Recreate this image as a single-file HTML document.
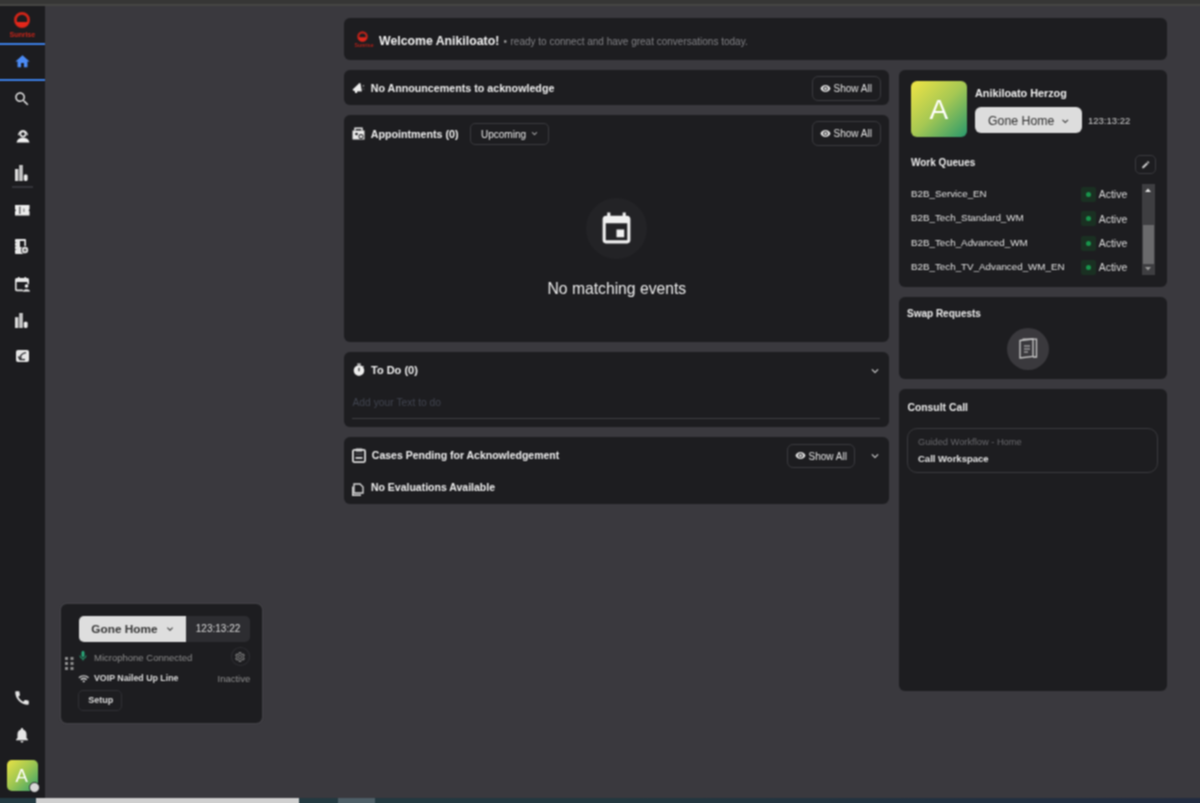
<!DOCTYPE html>
<html><head><meta charset="utf-8">
<style>
*{box-sizing:border-box;margin:0;padding:0}
html,body{width:1200px;height:803px;overflow:hidden;background:#3a393e;}
body{font-family:"Liberation Sans",sans-serif;color:#e6e6e6}
.a{position:absolute}
.card{position:absolute;background:#1d1d20;border-radius:6px}
.t{position:absolute;white-space:nowrap;line-height:1}
.btn{position:absolute;border:1px solid #3a3a3e;border-radius:6px}
svg{position:absolute;overflow:visible}
#wrap{position:absolute;left:0;top:0;width:1200px;height:803px;filter:url(#bl)}
</style></head><body><svg width="0" height="0" style="position:absolute"><filter id="bl" color-interpolation-filters="sRGB" x="0" y="0" width="100%" height="100%"><feConvolveMatrix order="3" kernelMatrix="1 2 1 2 4 2 1 2 1" divisor="16" edgeMode="duplicate"/></filter></svg><div id="wrap">
<div class="a" style="left:0;top:0;width:1200px;height:4px;background:#363635"></div>
<div class="a" style="left:0;top:4px;width:1200px;height:2px;background:#464644"></div>
<div class="a" style="left:0;top:6px;width:45px;height:792px;background:#1c1c1f"></div>
<div class="a" style="left:0;top:798px;width:1200px;height:5px;background:linear-gradient(90deg,#233a42 0%,#23383f 50%,#222c40 100%)"></div>
<div class="a" style="left:36px;top:798px;width:263px;height:5px;background:#cfcfcf"></div>
<div class="a" style="left:338px;top:798px;width:37px;height:5px;background:#4d5e66"></div>
<svg style="left:13px;top:10.5px;" width="18" height="18" viewBox="0 0 18 18"><circle cx="9" cy="9" r="6.6" fill="none" stroke="#cc2418" stroke-width="2.8"/><path d="M2.6 11 A6.6 6.6 0 0 0 15.4 11 Z" fill="#e3271b"/></svg>
<div class="t" style="left:9.5px;top:31.41px;font-size:7.2px;font-weight:700;color:#c62419;letter-spacing:-0.1px;">Sunrise</div>
<div class="a" style="left:0;top:43px;width:45px;height:2px;background:#3b7ee6"></div>
<div class="a" style="left:0;top:79px;width:45px;height:2px;background:#3b7ee6"></div>
<svg style="left:13.5px;top:52.5px;" width="17" height="17" viewBox="0 0 24 24"><path fill="#4b8bf5" d="M10 20v-6h4v6h5v-8h3L12 3 2 12h3v8z"/></svg>
<svg style="left:13px;top:89.5px;" width="18" height="18" viewBox="0 0 24 24"><path fill="#e0e0e0" d="M15.5 14h-.79l-.28-.27C15.41 12.59 16 11.11 16 9.5 16 5.91 13.09 3 9.5 3S3 5.91 3 9.5 5.91 16 9.5 16c1.61 0 3.090-.59 4.23-1.57l.27.28v.79l5 4.99L20.49 19l-4.990-5zm-6 0C7.01 14 5 11.99 5 9.5S7.01 5 9.5 5 14 7.01 14 9.5 11.99 14 9.5 14z"/></svg>
<svg style="left:15.5px;top:129px;" width="14" height="14" viewBox="0 0 14 14"><circle cx="7" cy="5" r="2.6" fill="none" stroke="#e8e8e8" stroke-width="1.6"/><path d="M2.6 6.2 A4.4 4.4 0 0 1 11.4 6.2" fill="none" stroke="#e8e8e8" stroke-width="1.3"/><path d="M0.5 13.5 C1.5 9.8 4 8.8 7 8.8 C10 8.8 12.5 9.8 13.5 13.5 Z" fill="#f0f0f0"/></svg>
<svg style="left:15.4px;top:164.5px;" width="13" height="16" viewBox="0 0 13 16"><rect x="0" y="4" width="3.4" height="12" fill="#d8d8d8"/><rect x="4.2" y="0" width="3.6" height="16" fill="#c8c8c8"/><rect x="8.8" y="9.5" width="3.8" height="6.5" rx="1.4" fill="#ececec"/></svg>
<div class="a" style="left:12px;top:186px;width:21px;height:2px;background:#34343a"></div>
<svg style="left:15.3px;top:205px;" width="14.5" height="10.5" viewBox="0 0 14.5 10.5"><path d="M0 0H14.5V4.2A1.1 1.1 0 0 0 14.5 6.3V10.5H0V6.3A1.1 1.1 0 0 0 0 4.2Z" fill="#ececec"/><rect x="4.3" y="1.5" width="1.1" height="7.5" fill="#3a3a3e"/><rect x="8.2" y="3.5" width="1.4" height="3.5" fill="#8a8a8a"/></svg>
<svg style="left:15.3px;top:239.3px;" width="14" height="15" viewBox="0 0 14 15"><rect x="0" y="0" width="11" height="15" rx="1" fill="#e6e6e6"/><rect x="5" y="2" width="4.3" height="6" fill="#1c1c1f"/><rect x="0" y="3" width="1.3" height="1" fill="#6a6a6a"/><rect x="0" y="6.5" width="1.3" height="1" fill="#6a6a6a"/><rect x="0" y="10" width="1.3" height="1" fill="#6a6a6a"/><circle cx="10" cy="11" r="4" fill="#1c1c1f"/><circle cx="10" cy="11" r="3.2" fill="#e6e6e6"/><circle cx="10" cy="11" r="1.6" fill="#6a6a6a"/></svg>
<svg style="left:15px;top:277px;" width="15" height="14.5" viewBox="0 0 15 14.5"><rect x="0.8" y="1.8" width="12.4" height="11.6" rx="1" fill="none" stroke="#e6e6e6" stroke-width="1.6"/><rect x="0.8" y="1.8" width="12.4" height="3.2" fill="#e6e6e6"/><rect x="3" y="0" width="1.5" height="2.5" fill="#e6e6e6"/><rect x="9.5" y="0" width="1.5" height="2.5" fill="#e6e6e6"/><circle cx="11.3" cy="10.8" r="4" fill="#1c1c1f"/><circle cx="11.5" cy="9" r="1.8" fill="#f0f0f0"/><path d="M8 14.5 C8.3 11.5 14.7 11.5 15 14.5Z" fill="#f0f0f0"/></svg>
<svg style="left:15.4px;top:312.5px;" width="13" height="15" viewBox="0 0 13 15"><rect x="0" y="4.2" width="3.4" height="10.8" fill="#d8d8d8"/><rect x="4.2" y="0" width="3.6" height="15" fill="#c8c8c8"/><rect x="8.8" y="8.8" width="3.8" height="6.2" rx="1.4" fill="#ececec"/></svg>
<svg style="left:15.5px;top:350.3px;" width="13" height="12" viewBox="0 0 13 12"><rect x="0" y="0" width="13" height="12" rx="2" fill="#e6e6e6"/><path d="M10 2.6 Q5 3.2 3.6 8.4" fill="none" stroke="#2a2a2e" stroke-width="1.4"/><path d="M3.5 9.6 H9" fill="none" stroke="#2a2a2e" stroke-width="1.4"/><path d="M2.2 6.5 L3.6 8.8 L5.8 7.4" fill="none" stroke="#2a2a2e" stroke-width="1.2"/></svg>
<svg style="left:13px;top:689px;" width="18" height="18" viewBox="0 0 24 24"><path fill="#e6e6e6" d="M20.01 15.38c-1.23 0-2.42-.2-3.53-.56-.35-.12-.74-.03-1.01.24l-1.57 1.97c-2.83-1.35-5.48-3.9-6.89-6.830l1.95-1.66c.27-.28.35-.67.24-1.02-.37-1.11-.56-2.3-.56-3.53 0-.54-.45-.99-.99-.99H4.19C3.65 3 3 3.24 3 3.99 3 13.28 10.73 21 20.01 21c.71 0 .99-.63.99-1.18v-3.45c0-.54-.45-.99-.99-.99z"/></svg>
<svg style="left:13px;top:726px;" width="18" height="18" viewBox="0 0 24 24"><path fill="#e6e6e6" d="M12 22c1.1 0 2-.9 2-2h-4c0 1.1.89 2 2 2zm6-6v-5c0-3.07-1.64-5.64-4.5-6.32V4c0-.83-.67-1.5-1.5-1.5s-1.5.67-1.5 1.5v.68C7.63 5.36 6 7.92 6 11v5l-2 2v1h16v-1l-2-2z"/></svg>
<div class="a" style="left:7px;top:760px;width:31px;height:31px;border-radius:5px;background:linear-gradient(135deg,#e9e245 0%,#9bc552 50%,#2f9e6c 100%)"></div>
<div class="t" style="left:15.6px;top:766.94px;font-size:18.5px;font-weight:400;color:#ffffff;">A</div>
<div class="a" style="left:29px;top:782px;width:11px;height:11px;border-radius:50%;background:#d8d8d8;border:1.5px solid #1c1c1f"></div>
<div class="card" style="left:344px;top:18px;width:823px;height:42px"></div>
<div class="card" style="left:344px;top:70px;width:545px;height:35px"></div>
<div class="card" style="left:344px;top:115px;width:545px;height:227px"></div>
<div class="card" style="left:344px;top:352px;width:545px;height:75px"></div>
<div class="card" style="left:344px;top:437px;width:545px;height:67px"></div>
<div class="card" style="left:899px;top:70px;width:268px;height:217px"></div>
<div class="card" style="left:899px;top:297px;width:268px;height:82px"></div>
<div class="card" style="left:899px;top:389px;width:268px;height:302px"></div>
<div class="card" style="left:61px;top:604px;width:201px;height:119px;box-shadow:0 0 0 1.5px #403f44"></div>
<svg style="left:357px;top:31px;" width="11" height="11" viewBox="0 0 11 11"><circle cx="5.5" cy="5.5" r="4.2" fill="none" stroke="#b8221a" stroke-width="2.2"/><path d="M1.3 6.3 A4.2 4.2 0 0 0 9.7 6.3 Z" fill="#dd261b"/></svg>
<div class="t" style="left:354.5px;top:43.10px;font-size:5.2px;font-weight:700;color:#b02018;">Sunrise</div>
<div class="t" style="left:379px;top:34.59px;font-size:12.3px;font-weight:700;color:#f2f2f2;">Welcome Anikiloato!</div>
<div class="t" style="left:503.5px;top:36.53px;font-size:10px;font-weight:400;color:#9a9a9a;">&bull;</div>
<div class="t" style="left:510.5px;top:36.53px;font-size:10px;font-weight:400;color:#808084;">ready to connect and have great conversations today.</div>
<svg style="left:352px;top:82px;" width="13" height="12" viewBox="0 0 13 12"><path d="M0.8 7.2 L7.2 1.2 C7.8 0.7 8.3 0.9 8.5 1.6 L9.8 8.4 C9.9 9.1 9.5 9.5 8.9 9.4 L5.5 9.2 L5 11 L3 11 L2.8 9 C1 8.8 0.3 8 0.8 7.2Z" fill="#ececec"/><rect x="10.6" y="3" width="1.6" height="1.6" fill="#8a8a8a"/><rect x="10.8" y="6.5" width="1.5" height="1.2" fill="#5a5a5a"/></svg>
<div class="t" style="left:370.7px;top:82.94px;font-size:10.7px;font-weight:700;color:#f0f0f0;">No Announcements to acknowledge</div>
<div class="btn" style="left:812px;top:75.5px;width:69px;height:25px"></div>
<svg style="left:819.5px;top:82.5px;" width="11" height="11" viewBox="0 0 24 24"><path fill="#e0e0e0" d="M12 4.5C7 4.5 2.73 7.61 1 12c1.73 4.39 6 7.5 11 7.5s9.27-3.11 11-7.5c-1.73-4.39-6-7.5-11-7.5zM12 17c-2.76 0-5-2.240-5-5s2.24-5 5-5 5 2.24 5 5-2.24 5-5 5zm0-8c-1.66 0-3 1.34-3 3s1.34 3 3 3 3-1.34 3-3-1.34-3-3-3z"/></svg>
<div class="t" style="left:833.5px;top:83.94px;font-size:10px;font-weight:400;color:#e4e4e4;">Show All</div>
<svg style="left:352px;top:127px;" width="13" height="13" viewBox="0 0 13 13"><path d="M0.5 3.5 H12.5 V12.5 H0.5 Z" fill="#e8e8e8"/><path d="M3 3.5 V1.2 H10 V3.5" fill="none" stroke="#e8e8e8" stroke-width="1.5"/><circle cx="4.5" cy="7" r="1.3" fill="#1d1d20"/><circle cx="9" cy="9.5" r="2.5" fill="#1d1d20"/><circle cx="9" cy="9.5" r="1.6" fill="#e8e8e8"/></svg>
<div class="t" style="left:370.7px;top:129.14px;font-size:10.7px;font-weight:700;color:#f0f0f0;">Appointments (0)</div>
<div class="btn" style="left:470px;top:123px;width:79px;height:22px;border-radius:5px"></div>
<div class="t" style="left:481px;top:129.94px;font-size:10px;font-weight:400;color:#ececec;">Upcoming</div>
<svg style="left:528.5px;top:127.5px;" width="11" height="11" viewBox="0 0 24 24"><path fill="#bdbdbd" d="M7.41 8.59L12 13.17l4.59-4.58L18 10l-6 6-6-6 1.41-1.41z"/></svg>
<div class="btn" style="left:812px;top:121px;width:69px;height:25px"></div>
<svg style="left:819.5px;top:128.0px;" width="11" height="11" viewBox="0 0 24 24"><path fill="#e0e0e0" d="M12 4.5C7 4.5 2.73 7.61 1 12c1.73 4.39 6 7.5 11 7.5s9.27-3.11 11-7.5c-1.73-4.39-6-7.5-11-7.5zM12 17c-2.76 0-5-2.240-5-5s2.24-5 5-5 5 2.24 5 5-2.24 5-5 5zm0-8c-1.66 0-3 1.34-3 3s1.34 3 3 3 3-1.34 3-3-1.34-3-3-3z"/></svg>
<div class="t" style="left:833.5px;top:129.44px;font-size:10px;font-weight:400;color:#e4e4e4;">Show All</div>
<div class="a" style="left:585.5px;top:197.5px;width:61px;height:61px;border-radius:50%;background:#232326"></div>
<svg style="left:597.5px;top:210.5px;" width="37" height="37" viewBox="0 0 24 24"><path fill="#f0f0f0" d="M17 12h-5v5h5v-5zM16 1v2H8V1H6v2H5c-1.11 0-1.99.9-1.99 2L3 19c0 1.1.89 2 2 2h14c1.1 0 2-.9 2-2V5c0-1.1-.9-2-2-2h-1V1h-2zm3 18H5V8h14v11z"/></svg>
<div class="t" style="left:547.5px;top:281.01px;font-size:15.7px;font-weight:400;color:#ececec;">No matching events</div>
<svg style="left:351.5px;top:363px;" width="14" height="14" viewBox="0 0 24 24"><path fill="#ededed" d="M9 1h6v2H9zm10.03 6.39l1.42-1.42c-.43-.51-.9-.99-1.410-1.41l-1.42 1.42C16.07 4.42 14.12 4 12 4c-4.97 0-9 4.03-9 9s4.02 9 9 9 9-4.03 9-9c0-2.12-.74-4.07-1.97-5.61zM13 14h-2V8h2v6z"/></svg>
<div class="t" style="left:371px;top:365.49px;font-size:11px;font-weight:700;color:#f0f0f0;">To Do (0)</div>
<svg style="left:868px;top:363.5px;" width="14" height="14" viewBox="0 0 24 24"><path fill="#cfcfcf" d="M7.41 8.59L12 13.17l4.59-4.58L18 10l-6 6-6-6 1.41-1.41z"/></svg>
<div class="t" style="left:352.5px;top:397.58px;font-size:10.3px;font-weight:400;color:#40444f;">Add your Text to do</div>
<div class="a" style="left:352px;top:418px;width:528px;height:1px;background:#3e3e42"></div>
<svg style="left:352px;top:447.5px;" width="14" height="15" viewBox="0 0 14 15"><rect x="0.9" y="1.9" width="12.2" height="12.2" rx="1.5" fill="none" stroke="#d8d8d8" stroke-width="1.8"/><rect x="3.5" y="0.5" width="7" height="3" rx="0.8" fill="#d8d8d8"/><rect x="3.5" y="9" width="7" height="1.8" fill="#d8d8d8"/><rect x="3.5" y="5" width="7" height="2.5" fill="#3a3a3e"/></svg>
<div class="t" style="left:371.8px;top:450.11px;font-size:10.5px;font-weight:700;color:#f0f0f0;">Cases Pending for Acknowledgement</div>
<div class="btn" style="left:787px;top:443.5px;width:68px;height:24.5px"></div>
<svg style="left:794.5px;top:450.25px;" width="11" height="11" viewBox="0 0 24 24"><path fill="#e0e0e0" d="M12 4.5C7 4.5 2.73 7.61 1 12c1.73 4.39 6 7.5 11 7.5s9.27-3.11 11-7.5c-1.73-4.39-6-7.5-11-7.5zM12 17c-2.76 0-5-2.240-5-5s2.24-5 5-5 5 2.24 5 5-2.24 5-5 5zm0-8c-1.66 0-3 1.34-3 3s1.34 3 3 3 3-1.34 3-3-1.34-3-3-3z"/></svg>
<div class="t" style="left:808.5px;top:451.69px;font-size:10px;font-weight:400;color:#e4e4e4;">Show All</div>
<svg style="left:868px;top:448.5px;" width="14" height="14" viewBox="0 0 24 24"><path fill="#cfcfcf" d="M7.41 8.59L12 13.17l4.59-4.58L18 10l-6 6-6-6 1.41-1.41z"/></svg>
<svg style="left:352px;top:483px;" width="13" height="13" viewBox="0 0 13 13"><path d="M2 1 H8 L11 4 V10 H2 Z" fill="none" stroke="#d8d8d8" stroke-width="1.4"/><path d="M0.7 3.5 V12.3 H9" fill="none" stroke="#d8d8d8" stroke-width="1.4"/></svg>
<div class="t" style="left:370.9px;top:481.91px;font-size:10.5px;font-weight:700;color:#f0f0f0;">No Evaluations Available</div>
<div class="a" style="left:911px;top:81px;width:56px;height:56px;border-radius:6px;background:linear-gradient(135deg,#f0e445 0%,#a6c853 50%,#28996c 100%)"></div>
<div class="t" style="left:929.5px;top:95.80px;font-size:28px;font-weight:400;color:#ffffff;">A</div>
<div class="t" style="left:975px;top:88.46px;font-size:10.8px;font-weight:700;color:#f0f0f0;">Anikiloato Herzog</div>
<div class="a" style="left:974.5px;top:106.5px;width:107px;height:26.5px;border-radius:6px;background:#dddddd"></div>
<div class="t" style="left:988px;top:114.59px;font-size:12.3px;font-weight:400;color:#2e2e2e;">Gone Home</div>
<svg style="left:1058.5px;top:114.5px;" width="12.5" height="12.5" viewBox="0 0 24 24"><path fill="#3b3b3b" d="M7.41 8.59L12 13.17l4.59-4.58L18 10l-6 6-6-6 1.41-1.41z"/></svg>
<div class="t" style="left:1088px;top:115.96px;font-size:9.5px;font-weight:400;color:#cfcfcf;">123:13:22</div>
<div class="t" style="left:911px;top:158.03px;font-size:10px;font-weight:700;color:#ececec;">Work Queues</div>
<div class="btn" style="left:1135px;top:154.5px;width:20.5px;height:19px;border-radius:5px"></div>
<svg style="left:1140.5px;top:159.5px;" width="9.5" height="9.5" viewBox="0 0 24 24"><path fill="#c8c8c8" d="M3 17.25V21h3.75L17.81 9.94l-3.75-3.75L3 17.25zM20.71 7.04c.39-.39.39-1.02 0-1.41l-2.34-2.34c-.39-.39-1.02-.39-1.41 0l-1.83 1.83 3.75 3.75 1.83-1.83z"/></svg>
<div class="t" style="left:911px;top:189.00px;font-size:9.8px;font-weight:400;color:#e2e2e2;">B2B_Service_EN</div>
<div class="a" style="left:1080.5px;top:186.9px;width:15px;height:15px;border-radius:2px;background:#1a3022"></div>
<div class="a" style="left:1085.5px;top:191.9px;width:5px;height:5px;border-radius:50%;background:#18954c"></div>
<div class="t" style="left:1098.7px;top:189.31px;font-size:10.5px;font-weight:400;color:#dcdcdc;">Active</div>
<div class="t" style="left:911px;top:213.40px;font-size:9.8px;font-weight:400;color:#e2e2e2;">B2B_Tech_Standard_WM</div>
<div class="a" style="left:1080.5px;top:211.3px;width:15px;height:15px;border-radius:2px;background:#1a3022"></div>
<div class="a" style="left:1085.5px;top:216.3px;width:5px;height:5px;border-radius:50%;background:#18954c"></div>
<div class="t" style="left:1098.7px;top:213.71px;font-size:10.5px;font-weight:400;color:#dcdcdc;">Active</div>
<div class="t" style="left:911px;top:237.70px;font-size:9.8px;font-weight:400;color:#e2e2e2;">B2B_Tech_Advanced_WM</div>
<div class="a" style="left:1080.5px;top:235.6px;width:15px;height:15px;border-radius:2px;background:#1a3022"></div>
<div class="a" style="left:1085.5px;top:240.6px;width:5px;height:5px;border-radius:50%;background:#18954c"></div>
<div class="t" style="left:1098.7px;top:238.01px;font-size:10.5px;font-weight:400;color:#dcdcdc;">Active</div>
<div class="t" style="left:911px;top:262.00px;font-size:9.8px;font-weight:400;color:#e2e2e2;">B2B_Tech_TV_Advanced_WM_EN</div>
<div class="a" style="left:1080.5px;top:259.9px;width:15px;height:15px;border-radius:2px;background:#1a3022"></div>
<div class="a" style="left:1085.5px;top:264.9px;width:5px;height:5px;border-radius:50%;background:#18954c"></div>
<div class="t" style="left:1098.7px;top:262.31px;font-size:10.5px;font-weight:400;color:#dcdcdc;">Active</div>
<div class="a" style="left:1141.5px;top:184px;width:13px;height:91px;background:#3e3e41"></div>
<div class="a" style="left:1142.5px;top:225px;width:11px;height:38.5px;background:#6a6a6c"></div>
<svg style="left:1145px;top:188px;" width="6" height="4" viewBox="0 0 6 4"><path d="M0 4 L3 0.5 L6 4Z" fill="#e0e0e0"/></svg>
<svg style="left:1145px;top:267px;" width="6" height="4" viewBox="0 0 6 4"><path d="M0 0 L3 3.5 L6 0Z" fill="#9a9a9a"/></svg>
<div class="t" style="left:907px;top:308.84px;font-size:10px;font-weight:700;color:#ececec;">Swap Requests</div>
<div class="a" style="left:1007px;top:327.5px;width:42px;height:42px;border-radius:50%;background:#3a393d"></div>
<svg style="left:1019px;top:338px;" width="19" height="21" viewBox="0 0 19 21"><path d="M1 2.5 L14 1 V18.5 L1 20 Z" fill="none" stroke="#c8c8c8" stroke-width="1.3"/><path d="M3.5 1.2 H17.5 V19 H14" fill="none" stroke="#c8c8c8" stroke-width="1.3"/><path d="M5 8 H11 M5 11 H11 M5 14 H9" stroke="#c8c8c8" stroke-width="1.2"/></svg>
<div class="t" style="left:907.4px;top:403.20px;font-size:10.4px;font-weight:700;color:#ececec;">Consult Call</div>
<div class="btn" style="left:907px;top:427.5px;width:251px;height:45px;border-radius:10px"></div>
<div class="t" style="left:918px;top:437.53px;font-size:9.3px;font-weight:400;color:#68686c;">Guided Workflow - Home</div>
<div class="t" style="left:918px;top:453.96px;font-size:9.5px;font-weight:700;color:#e6e6e6;">Call Workspace</div>
<div class="a" style="left:78.5px;top:615.5px;width:107.5px;height:26.5px;border-radius:5px 0 0 5px;background:#dedede"></div>
<div class="a" style="left:186px;top:615.5px;width:63.5px;height:26.5px;border-radius:0 5px 5px 0;background:#2d2d31"></div>
<div class="t" style="left:91.3px;top:623.51px;font-size:11.8px;font-weight:700;color:#353535;">Gone Home</div>
<svg style="left:163.5px;top:623px;" width="12" height="12" viewBox="0 0 24 24"><path fill="#3c3c3c" d="M7.41 8.59L12 13.17l4.59-4.58L18 10l-6 6-6-6 1.41-1.41z"/></svg>
<div class="t" style="left:195.8px;top:624.33px;font-size:10px;font-weight:400;color:#dcdcdc;">123:13:22</div>
<svg style="left:65px;top:656.5px;" width="9" height="14" viewBox="0 0 9 14"><rect x="0.0" y="0" width="3" height="3" fill="#8e8e8e"/><rect x="5.5" y="0" width="3" height="3" fill="#8e8e8e"/><rect x="0.0" y="5" width="3" height="3" fill="#8e8e8e"/><rect x="5.5" y="5" width="3" height="3" fill="#8e8e8e"/><rect x="0.0" y="10" width="3" height="3" fill="#8e8e8e"/><rect x="5.5" y="10" width="3" height="3" fill="#8e8e8e"/></svg>
<svg style="left:77px;top:650px;" width="12" height="12" viewBox="0 0 24 24"><path fill="#2aa879" d="M12 14c1.66 0 2.99-1.34 2.99-3L15 5c0-1.66-1.34-3-3-3S9 3.34 9 5v6c0 1.66 1.34 3 3 3zm5.3-3c0 3-2.54 5.1-5.3 5.1S6.7 14 6.7 11H5c0 3.41 2.72 6.23 6 6.72V21h2v-3.28c3.28-.48 6-3.3 6-6.72h-1.7z"/></svg>
<div class="t" style="left:94px;top:652.96px;font-size:9.5px;font-weight:400;color:#8c8c8c;">Microphone Connected</div>
<div class="a" style="left:230.5px;top:647px;width:19.5px;height:19px;border-radius:50%;border:1px solid #2e2e32"></div>
<svg style="left:234px;top:650.5px;" width="12" height="12" viewBox="0 0 24 24"><path fill="#7a7a7a" d="M19.43 12.98c.04-.32.07-.64.07-.98 0-.34-.03-.66-.07-.98l2.11-1.65c.19-.15.24-.42.12-.64l-2-3.46c-.09-.16-.26-.25-.44-.25-.06 0-.12.01-.17.03l-2.49 1c-.52-.4-1.08-.73-1.69-.98l-.38-2.65C14.46 2.18 14.25 2 14 2h-4c-.25 0-.46.18-.49.42l-.38 2.65c-.61.25-1.17.59-1.69.98l-2.49-1c-.06-.02-.12-.03-.18-.03-.17 0-.34.09-.43.25l-2 3.46c-.13.22-.07.49.12.64l2.11 1.65c-.04.32-.07.65-.07.98 0 .33.03.66.07.98l-2.11 1.65c-.19.15-.24.42-.12.64l2 3.46c.09.16.26.25.44.25.06 0 .12-.01.17-.03l2.49-1c.52.4 1.08.73 1.69.98l.38 2.65c.03.24.24.42.49.42h4c.25 0 .46-.18.49-.42l.38-2.65c.61-.25 1.17-.59 1.69-.98l2.49 1c.06.02.12.03.18.03.17 0 .34-.09.43-.25l2-3.46c.12-.22.07-.49-.12-.64l-2.11-1.65zm-1.98-1.710c.04.31.05.52.05.73 0 .21-.02.43-.05.73l-.14 1.13.89.7 1.08.84-.7 1.21-1.27-.51-1.04-.42-.9.68c-.43.32-.84.56-1.25.73l-1.06.43-.16 1.13-.2 1.35h-1.4l-.19-1.35-.16-1.13-1.06-.43c-.43-.18-.83-.41-1.23-.71l-.91-.7-1.06.43-1.27.51-.7-1.21 1.08-.84.89-.7-.14-1.13c-.03-.31-.05-.54-.05-.74s.02-.43.05-.73l.14-1.13-.89-.7-1.08-.84.7-1.21 1.27.51 1.04.42.9-.68c.43-.32.84-.56 1.25-.73l1.06-.43.16-1.13.2-1.35h1.39l.19 1.35.16 1.13 1.06.43c.43.18.83.41 1.23.71l.91.7 1.06-.43 1.27-.51.7 1.21-1.07.85-.89.7.14 1.13zM12 8c-2.21 0-4 1.79-4 4s1.79 4 4 4 4-1.79 4-4-1.79-4-4-4zm0 6c-1.1 0-2-.9-2-2s.9-2 2-2 2 .9 2 2-.9 2-2 2z"/></svg>
<svg style="left:78px;top:672.5px;" width="11.5" height="11.5" viewBox="0 0 24 24"><path fill="#d0d0d0" d="M1 9l2 2c4.97-4.97 13.03-4.97 18 0l2-2C16.93 2.93 7.08 2.93 1 9zm8 8l3 3 3-3c-1.65-1.66-4.34-1.66-6 0zm-4-4l2 2c2.76-2.76 7.24-2.76 10 0l2-2C15.14 9.14 8.87 9.14 5 13z"/></svg>
<div class="t" style="left:94px;top:674.35px;font-size:8.8px;font-weight:700;color:#dcdcdc;">VOIP Nailed Up Line</div>
<div class="t" style="left:217.5px;top:673.76px;font-size:9.5px;font-weight:400;color:#909090;">Inactive</div>
<div class="btn" style="left:77.5px;top:689.5px;width:44.5px;height:21.5px;border-radius:5px;border-color:#303034"></div>
<div class="t" style="left:88.3px;top:696.38px;font-size:9px;font-weight:700;color:#dcdcdc;">Setup</div>
</div></body></html>
